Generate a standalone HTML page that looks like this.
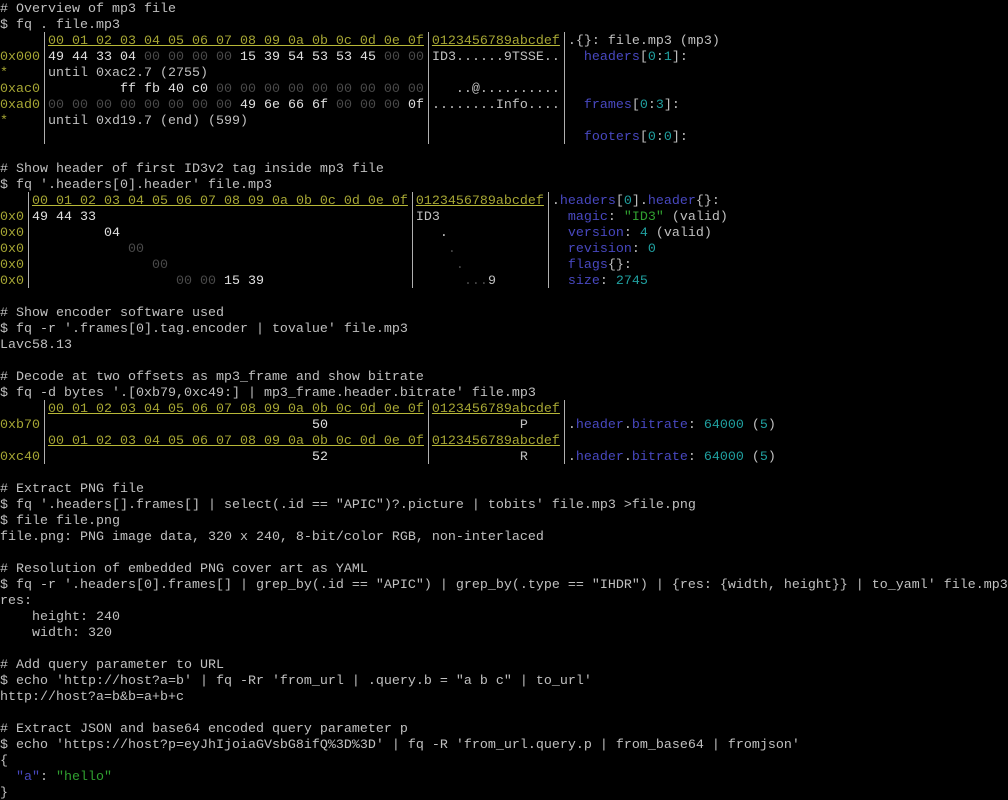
<!DOCTYPE html>
<html><head><meta charset="utf-8">
<style>
html,body{margin:0;padding:0;background:#000;width:1008px;height:800px;overflow:hidden}
pre{margin:0;padding-top:2px;font-family:"Liberation Mono",monospace;font-size:13.33px;line-height:16px;color:#c0c0c0;white-space:pre;position:relative}
.a{color:#a6a634}
.u{color:#a6a634;text-decoration:underline;text-decoration-color:#b8b838}
.z{color:#4a4a4a}
.w{color:#e0e0e0}
.b{color:#4848c0}
.n{color:#20a0a0}
.g{color:#30a030}
.bar{position:absolute;width:1px;background:#b0b0b0}
</style></head><body>
<pre><div class="bar" style="left:44px;top:32px;height:112px"></div><div class="bar" style="left:428px;top:32px;height:112px"></div><div class="bar" style="left:564px;top:32px;height:112px"></div><div class="bar" style="left:28px;top:192px;height:96px"></div><div class="bar" style="left:412px;top:192px;height:96px"></div><div class="bar" style="left:548px;top:192px;height:96px"></div><div class="bar" style="left:44px;top:400px;height:64px"></div><div class="bar" style="left:428px;top:400px;height:64px"></div><div class="bar" style="left:564px;top:400px;height:64px"></div># Overview of mp3 file
$ fq . file.mp3
      <span class="u">00 01 02 03 04 05 06 07 08 09 0a 0b 0c 0d 0e 0f</span> <span class="u">0123456789abcdef</span> .{}: file.mp3 (mp3)
<span class="a">0x000</span> <span class="w">49 44 33 04</span> <span class="z">00 00 00 00</span> <span class="w">15 39 54 53 53 45</span> <span class="z">00 00</span> ID3......9TSSE..   <span class="b">headers</span>[<span class="n">0</span>:<span class="n">1</span>]:
<span class="a">*</span>     until 0xac2.7 (2755)
<span class="a">0xac0</span>          <span class="w">ff fb 40 c0</span> <span class="z">00 00 00 00 00 00 00 00 00</span>    ..@..........
<span class="a">0xad0</span> <span class="z">00 00 00 00 00 00 00 00</span> <span class="w">49 6e 66 6f</span> <span class="z">00 00 00</span> <span class="w">0f</span> ........Info....   <span class="b">frames</span>[<span class="n">0</span>:<span class="n">3</span>]:
<span class="a">*</span>     until 0xd19.7 (end) (599)
                                                                         <span class="b">footers</span>[<span class="n">0</span>:<span class="n">0</span>]:

# Show header of first ID3v2 tag inside mp3 file
$ fq '.headers[0].header' file.mp3
    <span class="u">00 01 02 03 04 05 06 07 08 09 0a 0b 0c 0d 0e 0f</span> <span class="u">0123456789abcdef</span> .<span class="b">headers</span>[<span class="n">0</span>].<span class="b">header</span>{}:
<span class="a">0x0</span> <span class="w">49 44 33</span>                                        ID3                <span class="b">magic</span>: <span class="g">"ID3"</span> (valid)
<span class="a">0x0</span>          <span class="w">04</span>                                        .               <span class="b">version</span>: <span class="n">4</span> (valid)
<span class="a">0x0</span>             <span class="z">00</span>                                      <span class="z">.</span>              <span class="b">revision</span>: <span class="n">0</span>
<span class="a">0x0</span>                <span class="z">00</span>                                    <span class="z">.</span>             <span class="b">flags</span>{}:
<span class="a">0x0</span>                   <span class="z">00 00</span> <span class="w">15 39</span>                         <span class="z">...</span>9         <span class="b">size</span>: <span class="n">2745</span>

# Show encoder software used
$ fq -r '.frames[0].tag.encoder | tovalue' file.mp3
Lavc58.13

# Decode at two offsets as mp3_frame and show bitrate
$ fq -d bytes '.[0xb79,0xc49:] | mp3_frame.header.bitrate' file.mp3
      <span class="u">00 01 02 03 04 05 06 07 08 09 0a 0b 0c 0d 0e 0f</span> <span class="u">0123456789abcdef</span>
<span class="a">0xb70</span>                                  <span class="w">50</span>                        P     .<span class="b">header</span>.<span class="b">bitrate</span>: <span class="n">64000</span> (<span class="n">5</span>)
      <span class="u">00 01 02 03 04 05 06 07 08 09 0a 0b 0c 0d 0e 0f</span> <span class="u">0123456789abcdef</span>
<span class="a">0xc40</span>                                  <span class="w">52</span>                        R     .<span class="b">header</span>.<span class="b">bitrate</span>: <span class="n">64000</span> (<span class="n">5</span>)

# Extract PNG file
$ fq '.headers[].frames[] | select(.id == "APIC")?.picture | tobits' file.mp3 &gt;file.png
$ file file.png
file.png: PNG image data, 320 x 240, 8-bit/color RGB, non-interlaced

# Resolution of embedded PNG cover art as YAML
$ fq -r '.headers[0].frames[] | grep_by(.id == "APIC") | grep_by(.type == "IHDR") | {res: {width, height}} | to_yaml' file.mp3
res:
    height: 240
    width: 320

# Add query parameter to URL
$ echo 'http://host?a=b' | fq -Rr 'from_url | .query.b = "a b c" | to_url'
http://host?a=b&amp;b=a+b+c

# Extract JSON and base64 encoded query parameter p
$ echo 'https://host?p=eyJhIjoiaGVsbG8ifQ%3D%3D' | fq -R 'from_url.query.p | from_base64 | fromjson'
{
  <span class="b">"a"</span>: <span class="g">"hello"</span>
}</pre>
</body></html>
